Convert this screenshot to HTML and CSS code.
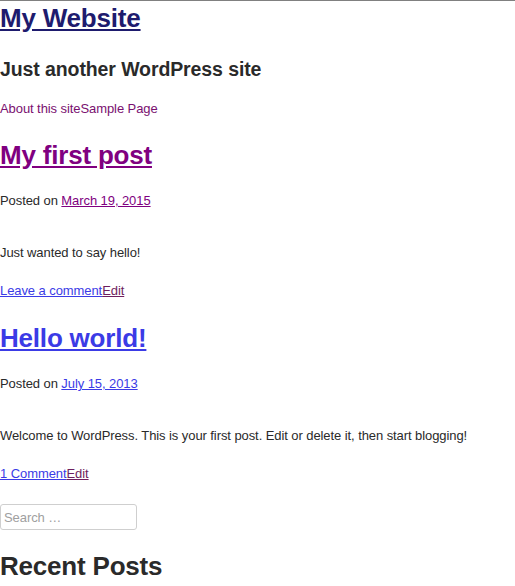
FILE: index.html
```html
<!DOCTYPE html>
<html lang="en">
<head>
<meta charset="utf-8">
<title>My Website</title>
<link rel="stylesheet" href="styles.css">
</head>
<body>
<header class="site-header">
  <h1 class="site-title"><a href="#">My Website</a></h1>
  <h2 class="site-description">Just another WordPress site</h2>
  <nav class="site-nav"><a href="#">About this site</a><a href="#">Sample Page</a></nav>
</header>
<main>
  <article class="post">
    <h1 class="entry-title"><a class="visited" href="#">My first post</a></h1>
    <p class="entry-meta">Posted on <a class="visited" href="#">March 19, 2015</a></p>
    <p class="entry-content">Just wanted to say hello!</p>
    <p class="entry-footer"><a href="#">Leave a comment</a><a class="edit" href="#">Edit</a></p>
  </article>
  <article class="post">
    <h1 class="entry-title"><a href="#">Hello world!</a></h1>
    <p class="entry-meta">Posted on <a href="#">July 15, 2013</a></p>
    <p class="entry-content">Welcome to WordPress. This is your first post. Edit or delete it, then start blogging!</p>
    <p class="entry-footer"><a href="#">1 Comment</a><a class="edit" href="#">Edit</a></p>
  </article>
</main>
<aside class="sidebar">
  <form class="search-form"><input class="search-field" type="search" placeholder="Search …"></form>
  <h1 class="widget-title">Recent Posts</h1>
</aside>
</body>
</html>
```

FILE: styles.css
```css
html, body {
  margin: 0;
  padding: 0;
  background: #fff;
}
body {
  border-top: 1px solid #808080;
  font-family: "Liberation Sans", Arial, sans-serif;
  font-size: 13px;
  line-height: 15px;
  letter-spacing: -0.08px;
  color: #2a2a2a;
}
h1, h2, p, form {
  margin: 0;
}
a {
  color: #3b3be6;
}
.site-title {
  font-size: 26px;
  line-height: 30px;
  letter-spacing: -0.2px;
  margin-top: 2px;
}
.site-title a {
  color: #1e1b6e;
}
.site-description {
  font-size: 19.5px;
  line-height: 22px;
  letter-spacing: -0.1px;
  margin-top: 25px;
  color: #2a2a2a;
}
.site-nav {
  margin-top: 21px;
}
.site-nav a {
  color: #7a1070;
  text-decoration: none;
}
.entry-title {
  font-size: 26px;
  line-height: 30px;
  letter-spacing: -0.2px;
  margin-top: 24px;
}
.post + .post .entry-title {
  margin-top: 25px;
}
a.visited {
  color: #800080;
}
.entry-meta {
  margin-top: 23px;
}
.entry-content {
  margin-top: 37px;
}
.entry-footer {
  margin-top: 23px;
}
a.edit {
  color: #6e1e5e;
}
.search-form {
  margin-top: 23px;
  display: flex;
}
.search-field {
  box-sizing: border-box;
  width: 137px;
  height: 26px;
  margin: 0;
  padding: 2px 3px;
  border: 1px solid #cfcfcf;
  border-radius: 3px;
  font-family: "Liberation Sans", Arial, sans-serif;
  font-size: 13px;
  letter-spacing: -0.08px;
  color: #333;
  background: #fff;
  outline: none;
  -webkit-appearance: none;
  appearance: none;
}
.search-field::placeholder {
  color: #a0a0a0;
}
.widget-title {
  font-size: 26px;
  line-height: 30px;
  letter-spacing: -0.2px;
  margin-top: 21px;
  color: #2a2a2a;
}
```
